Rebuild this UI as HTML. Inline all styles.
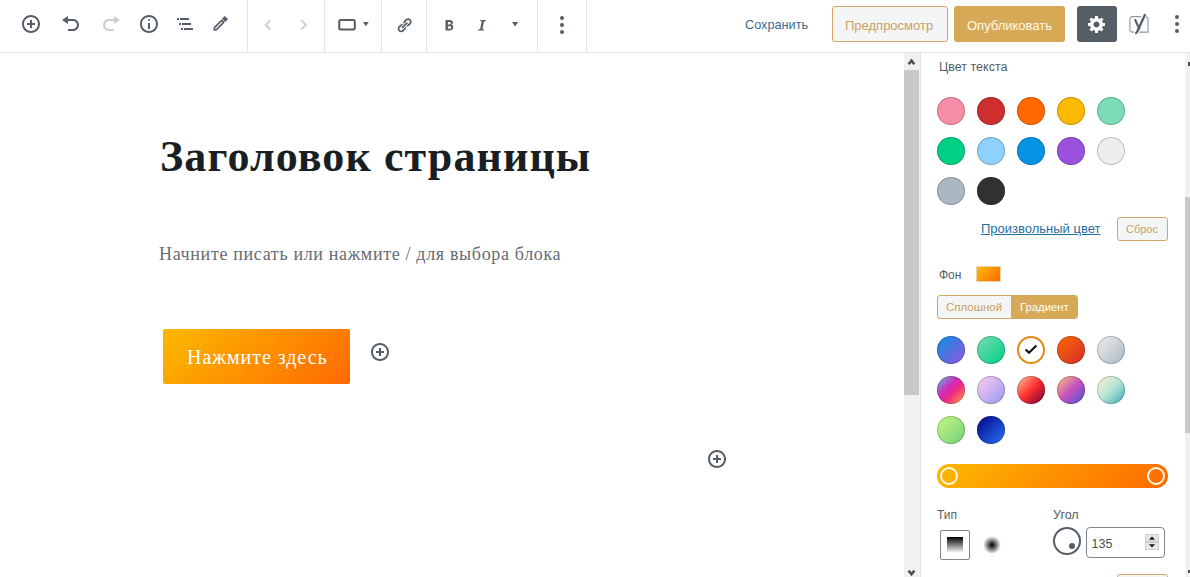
<!DOCTYPE html>
<html><head><meta charset="utf-8">
<style>
*{box-sizing:border-box;margin:0;padding:0}
html,body{width:1190px;height:577px;overflow:hidden;background:#fff;font-family:"Liberation Sans",sans-serif;color:#555d66}
.a{position:absolute}
.t{position:absolute;white-space:nowrap;line-height:1}
svg{position:absolute;display:block}
.sep{position:absolute;top:0;width:1px;height:52px;background:#e2e4e7}
.sw{position:absolute;width:28px;height:28px;border-radius:50%;box-shadow:inset 0 0 0 1px rgba(0,0,0,.2)}
</style></head><body>

<!-- HEADER -->
<div class="a" style="left:0;top:52px;width:1190px;height:1px;background:#e2e4e7"></div>
<div class="sep" style="left:247px"></div>
<div class="sep" style="left:324px"></div>
<div class="sep" style="left:381px"></div>
<div class="sep" style="left:426px"></div>
<div class="sep" style="left:537px"></div>
<div class="sep" style="left:586px"></div>

<!-- inserter -->
<svg style="left:21px;top:14px" width="20" height="20" viewBox="0 0 20 20"><path fill="#555d66" d="M10 1c-5 0-9 4-9 9s4 9 9 9 9-4 9-9-4-9-9-9zm0 16c-3.9 0-7-3.1-7-7s3.1-7 7-7 7 3.1 7 7-3.1 7-7 7zm1-11H9v3H6v2h3v3h2v-3h3V9h-3V6z"/></svg>
<!-- undo -->
<svg style="left:61px;top:14px" width="20" height="20" viewBox="0 0 20 20"><path fill="#555d66" d="M12 5H7V2L1 6l6 4V7h5c2.2 0 4 1.8 4 4s-1.8 4-4 4H7v2h5c3.3 0 6-2.7 6-6s-2.7-6-6-6z"/></svg>
<!-- redo -->
<svg style="left:100.5px;top:14px" width="20" height="20" viewBox="0 0 20 20"><path fill="#c9ced3" d="M8 5h5V2l6 4-6 4V7H8c-2.2 0-4 1.8-4 4s1.8 4 4 4h5v2H8c-3.3 0-6-2.7-6-6s2.7-6 6-6z"/></svg>
<!-- info -->
<svg style="left:139px;top:14px" width="20" height="20" viewBox="0 0 20 20"><path fill="#555d66" d="M9 15h2V9H9v6zm1-10c-.5 0-1 .5-1 1s.5 1 1 1 1-.5 1-1-.5-1-1-1zm0-4c-5 0-9 4-9 9s4 9 9 9 9-4 9-9-4-9-9-9zm0 16c-3.9 0-7-3.1-7-7s3.1-7 7-7 7 3.1 7 7-3.1 7-7 7z"/></svg>
<!-- outline -->
<svg style="left:170px;top:12px" width="30" height="24" viewBox="0 0 30 24"><g fill="#555d66"><rect x="7" y="6" width="2" height="2"/><rect x="10" y="6" width="9" height="2"/><rect x="9" y="11" width="2" height="2"/><rect x="12" y="11" width="9" height="2"/><rect x="11" y="16" width="2" height="2"/><rect x="14" y="16" width="9" height="2"/></g></svg>
<!-- pencil -->
<svg style="left:205.4px;top:10px" width="30" height="28" viewBox="0 0 30 28"><g transform="rotate(-45 14.9 14.15)"><path d="M8.6 12.75 H18.9 V15.55 H8.6 L6.8 14.15 Z" fill="none" stroke="#555d66" stroke-width="1.6" stroke-linejoin="round"/><rect x="20.2" y="11.85" width="4" height="4.6" fill="#555d66"/></g></svg>

<!-- nav arrows -->
<svg style="left:255px;top:12px" width="60" height="24" viewBox="0 0 60 24"><path fill="none" stroke="#ccd0d4" stroke-width="2" d="M15.3 8.2 L10.8 12.9 L15.3 17.5"/><path fill="none" stroke="#ccd0d4" stroke-width="2" d="M46.3 8.2 L50.8 12.9 L46.3 17.5"/></svg>
<!-- button icon -->
<svg style="left:334px;top:12px" width="40" height="24" viewBox="0 0 40 24"><rect x="5.2" y="8.1" width="15.6" height="9.4" rx="1.8" fill="none" stroke="#555d66" stroke-width="2"/><path fill="#555d66" d="M29 10 h5.8 l-2.9 4.3z"/></svg>
<!-- link -->
<svg style="left:395.65px;top:16.76px" width="16.47" height="16.47" viewBox="0 0 20 20"><path fill="#555d66" d="M17.74 2.76c1.68 1.690 1.68 4.41 0 6.1l-1.53 1.52c-1.12 1.12-2.7 1.47-4.14 1.090l2.62-2.61.76-.77.76-.76c.84-.84.84-2.2 0-3.04-.84-.85-2.2-.85-3.040 0l-.77.76-3.38 3.38c-.37-1.44-.02-3.02 1.1-4.14l1.52-1.53c1.69-1.68 4.42-1.68 6.1 0zM8.59 13.43l5.34-5.34c.42-.42.42-1.1 0-1.52-.44-.43-1.13-.39-1.53 0l-5.33 5.34c-.42.42-.42 1.1 0 1.52.44.43 1.130.39 1.52 0zm-.76 2.29l4.14-4.15c.38 1.44.03 3.02-1.09 4.14l-1.52 1.53c-1.69 1.68-4.41 1.68-6.1 0-1.68-1.68-1.680-4.42 0-6.1l1.53-1.52c1.12-1.12 2.7-1.470 4.14-1.1l-4.14 4.15c-.85.84-.85 2.2 0 3.05.84.84 2.2.84 3.04 0z"/></svg>
<!-- bold / italic / dropdown -->
<svg style="left:436px;top:12px" width="90" height="24" viewBox="0 0 90 24"><path fill="#555d66" d="M9.5 8 h4.1 c2.2 0 3.3 1 3.3 2.6 c0 1.1-.6 1.8-1.4 2.1 c1.1 .3 1.8 1.1 1.8 2.4 c0 1.8-1.3 3.4-3.6 3.4 H9.5z M11.9 10 v2.4 h1.6 c.9 0 1.3-.4 1.3-1.2 c0-.8-.5-1.2-1.3-1.2z M11.9 14.2 v2.6 h1.8 c1 0 1.5-.5 1.5-1.3 c0-.8-.5-1.3-1.5-1.3z"/><path fill="#555d66" d="M44.5 8 h5.5 l-.3 1.3 h-1.6 l-1.7 7.9 h1.6 l-.3 1.3 h-5.6 l.3-1.3 h1.7 l1.7-7.9 h-1.6z"/><path fill="#555d66" d="M76 10 h6.2 l-3.1 4.5z"/></svg>
<!-- more dots -->
<svg style="left:550px;top:10px" width="24" height="28" viewBox="0 0 24 28"><g fill="#555d66"><circle cx="12" cy="8" r="2"/><circle cx="12" cy="15" r="2"/><circle cx="12" cy="22" r="2"/></g></svg>

<!-- header right -->
<div class="t" style="left:745px;top:19px;font-size:12.7px;color:#3d6a8c">Сохранить</div>
<div class="a" style="left:832px;top:6px;width:116px;height:36px;border:1px solid #cfa663;border-radius:3px;background:#f3f5f6"></div>
<div class="t" style="left:845px;top:19px;font-size:13px;color:#c9a063">Предпросмотр</div>
<div class="a" style="left:954px;top:6px;width:111px;height:36px;border-radius:3px;background:#d6a956"></div>
<div class="t" style="left:967px;top:19px;font-size:13px;color:#fff8e8">Опубликовать</div>
<div class="a" style="left:1077px;top:6px;width:40px;height:36px;border-radius:3px;background:#555d66"></div>
<svg style="left:1087px;top:14px" width="20" height="20" viewBox="0 0 20 20"><path fill="#fff" d="M18 12h-2.18c-.17.7-.44 1.350-.81 1.93l1.54 1.54-2.1 2.1-1.54-1.54c-.58.36-1.23.63-1.91.79V19H8v-2.18c-.68-.16-1.33-.43-1.91-.79l-1.54 1.54-2.12-2.12 1.54-1.54c-.36-.58-.63-1.23-.79-1.91H1V9.030h2.17c.16-.7.44-1.35.8-1.94L2.43 5.550l2.1-2.1 1.54 1.54c.58-.37 1.24-.64 1.930-.81V2h3v2.18c.68.16 1.33.43 1.91.79l1.54-1.54 2.12 2.120-1.54 1.54c.36.59.64 1.24.8 1.94H18V12zm-8.5 1.5c1.66 0 3-1.34 3-3s-1.34-3-3-3-3 1.34-3 3 1.34 3 3 3z"/></svg>
<!-- yoast -->
<svg style="left:1122px;top:10px" width="40" height="28" viewBox="0 0 40 28"><path fill="none" stroke="#8f969d" stroke-width="1.1" d="M19 6.6 H10.6 A2.7 2.7 0 0 0 7.9 9.3 V19.4 A2.7 2.7 0 0 0 10.6 22.1 H12 M17.2 22.1 H26 V9.6 A2.8 2.8 0 0 0 24 6.9"/><path fill="none" stroke="#555d66" stroke-width="2.1" d="M12.9 9.3 L17.6 19.6"/><path fill="none" stroke="#555d66" stroke-width="2.3" d="M23.2 4.2 L15.2 21.6 Q14.6 23 13.3 23.5"/></svg>
<svg style="left:1165px;top:10px" width="24" height="28" viewBox="0 0 24 28"><g fill="#555d66"><circle cx="12" cy="7" r="2"/><circle cx="12" cy="14" r="2"/><circle cx="12" cy="21" r="2"/></g></svg>

<!-- MAIN CONTENT -->
<div class="t" style="left:160px;top:135px;font-family:'Liberation Serif',serif;font-weight:700;font-size:44px;letter-spacing:1.1px;color:#191e23">Заголовок страницы</div>
<div class="t" style="left:159px;top:245px;font-family:'Liberation Serif',serif;font-size:18px;letter-spacing:0.66px;color:#666c73">Начните писать или нажмите / для выбора блока</div>
<div class="a" style="left:163px;top:329px;width:187px;height:55px;border-radius:2px;background:linear-gradient(135deg,#fcb900 0%,#ff6900 100%)"></div>
<div class="t" style="left:187px;top:347px;font-family:'Liberation Serif',serif;font-size:20px;letter-spacing:0.95px;color:#fff">Нажмите здесь</div>
<svg style="left:370px;top:342px" width="20" height="20" viewBox="0 0 20 20"><path fill="#555d66" d="M10 1c-5 0-9 4-9 9s4 9 9 9 9-4 9-9-4-9-9-9zm0 16c-3.9 0-7-3.1-7-7s3.1-7 7-7 7 3.1 7 7-3.1 7-7 7zm1-11H9v3H6v2h3v3h2v-3h3V9h-3V6z"/></svg>
<svg style="left:707px;top:449px" width="20" height="20" viewBox="0 0 20 20"><path fill="#555d66" d="M10 1c-5 0-9 4-9 9s4 9 9 9 9-4 9-9-4-9-9-9zm0 16c-3.9 0-7-3.1-7-7s3.1-7 7-7 7 3.1 7 7-3.1 7-7 7zm1-11H9v3H6v2h3v3h2v-3h3V9h-3V6z"/></svg>

<!-- main scrollbar -->
<div class="a" style="left:904px;top:53px;width:16px;height:524px;background:#f1f1f1"></div>
<div class="a" style="left:904px;top:70px;width:15px;height:325px;background:#c8c8c8"></div>
<svg style="left:904px;top:53px" width="15" height="17" viewBox="0 0 15 17"><path fill="none" stroke="#505050" stroke-width="2.5" d="M4.6 11.2 L7.5 7.6 L10.4 11.2"/></svg>
<svg style="left:904px;top:560px" width="15" height="17" viewBox="0 0 15 17"><path fill="none" stroke="#505050" stroke-width="2.5" d="M4.6 10.6 L7.5 14.2 L10.4 10.6"/></svg>
<div class="a" style="left:920px;top:53px;width:1px;height:524px;background:#e2e4e7"></div>

<!-- SIDEBAR -->

<div class="t" style="left:939px;top:60.5px;font-size:12.5px;color:#555d66">Цвет текста</div>
<div class="sw" style="left:937px;top:97px;background:#f78da7"></div>
<div class="sw" style="left:977px;top:97px;background:#cf2e2e"></div>
<div class="sw" style="left:1017px;top:97px;background:#ff6900"></div>
<div class="sw" style="left:1057px;top:97px;background:#fcb900"></div>
<div class="sw" style="left:1097px;top:97px;background:#7bdcb5"></div>
<div class="sw" style="left:937px;top:137px;background:#00d084"></div>
<div class="sw" style="left:977px;top:137px;background:#8ed1fc"></div>
<div class="sw" style="left:1017px;top:137px;background:#0693e3"></div>
<div class="sw" style="left:1057px;top:137px;background:#9b51e0"></div>
<div class="sw" style="left:1097px;top:137px;background:#eeeeee"></div>
<div class="sw" style="left:937px;top:177px;background:#abb8c3"></div>
<div class="sw" style="left:977px;top:177px;background:#313131"></div>

<div class="t" style="left:981px;top:222px;font-size:13px;color:#1f6fa0;text-decoration:underline">Произвольный цвет</div>
<div class="a" style="left:1117px;top:217px;width:51px;height:24px;border:1px solid #cfa663;border-radius:3px;background:#f3f5f6"></div>
<div class="t" style="left:1126px;top:223.5px;font-size:11px;color:#c9a063">Сброс</div>

<div class="t" style="left:939px;top:269px;font-size:12px;color:#555d66">Фон</div>
<div class="a" style="left:976px;top:266px;width:25px;height:16px;border:1px solid #e6d6b0;background:linear-gradient(135deg,#fcb900 0%,#ff6900 100%)"></div>

<div class="a" style="left:937px;top:295px;width:141px;height:24px;border:1px solid #cfa663;border-radius:3px;background:#f3f5f6;overflow:hidden"><div class="a" style="left:73px;top:0;width:67px;height:22px;background:#d6a956"></div></div>
<div class="t" style="left:946px;top:301.5px;font-size:11.5px;color:#c9a063">Сплошной</div>
<div class="t" style="left:1020px;top:301.5px;font-size:11.3px;color:#fff">Градиент</div>
<div class="sw" style="left:937px;top:336px;background:linear-gradient(135deg,rgba(6,147,227,1) 0%,rgb(155,81,224) 100%)"></div>
<div class="sw" style="left:977px;top:336px;background:linear-gradient(135deg,rgb(122,220,180) 0%,rgb(0,208,130) 100%)"></div>
<div class="a" style="left:1017px;top:336px;width:28px;height:28px;border-radius:50%;border:2.6px solid #e08a12;background:#fff"></div>
<svg style="left:1017px;top:336px" width="28" height="28" viewBox="0 0 28 28"><path fill="none" stroke="#111" stroke-width="2.2" d="M8.6 13.5 L12 16.8 L19.4 9.5"/></svg>
<div class="sw" style="left:1057px;top:336px;background:linear-gradient(135deg,rgba(255,105,0,1) 0%,rgb(207,46,46) 100%)"></div>
<div class="sw" style="left:1097px;top:336px;background:linear-gradient(135deg,rgb(238,238,238) 0%,rgb(169,184,195) 100%)"></div>
<div class="sw" style="left:937px;top:376px;background:linear-gradient(135deg,rgb(74,234,220) 0%,rgb(151,120,209) 20%,rgb(207,42,186) 40%,rgb(238,44,130) 60%,rgb(251,105,98) 80%,rgb(254,248,76) 100%)"></div>
<div class="sw" style="left:977px;top:376px;background:linear-gradient(135deg,rgb(255,206,236) 0%,rgb(152,150,240) 100%)"></div>
<div class="sw" style="left:1017px;top:376px;background:linear-gradient(135deg,rgb(254,205,165) 0%,rgb(254,45,45) 50%,rgb(107,0,62) 100%)"></div>
<div class="sw" style="left:1057px;top:376px;background:linear-gradient(135deg,rgb(255,203,112) 0%,rgb(199,81,192) 50%,rgb(65,88,208) 100%)"></div>
<div class="sw" style="left:1097px;top:376px;background:linear-gradient(135deg,rgb(255,245,203) 0%,rgb(182,227,212) 50%,rgb(51,167,181) 100%)"></div>
<div class="sw" style="left:937px;top:416px;background:linear-gradient(135deg,rgb(202,248,128) 0%,rgb(113,206,126) 100%)"></div>
<div class="sw" style="left:977px;top:416px;background:linear-gradient(135deg,rgb(2,3,129) 0%,rgb(40,116,252) 100%)"></div>

<div class="a" style="left:937px;top:464px;width:231px;height:24px;border-radius:12px;background:linear-gradient(135deg,#fcb900 0%,#ff6900 100%)"></div>
<div class="a" style="left:940px;top:467px;width:18px;height:18px;border-radius:50%;border:2px solid #fff8e0"></div>
<div class="a" style="left:1147px;top:467px;width:18px;height:18px;border-radius:50%;border:2px solid #fff8e0"></div>

<div class="t" style="left:937px;top:509px;font-size:12px;color:#555d66">Тип</div>
<div class="a" style="left:940px;top:530px;width:30px;height:30px;border:1px solid #7e868e;border-radius:2px"></div>
<div class="a" style="left:947px;top:537px;width:16px;height:16px;background:linear-gradient(180deg,#000 0%,#fff 100%)"></div>
<div class="a" style="left:983px;top:536px;width:18px;height:18px;border-radius:50%;background:radial-gradient(closest-side,#000 0%,#1a1a1a 12%,#fff 100%)"></div>

<div class="t" style="left:1053px;top:508.5px;font-size:12.5px;color:#555d66">Угол</div>
<div class="a" style="left:1053px;top:527px;width:28px;height:28px;border:2px solid #555d66;border-radius:50%"></div>
<div class="a" style="left:1069px;top:543px;width:6px;height:6px;background:#555d66;border-radius:50%"></div>
<div class="a" style="left:1086px;top:527px;width:79px;height:31px;border:1px solid #7e868e;border-radius:4px;background:#fff"></div>
<div class="t" style="left:1091.5px;top:537.5px;font-size:12.5px;color:#4a4f55">135</div>
<div class="a" style="left:1145px;top:534px;width:14px;height:8px;background:#e6e6e6;border:1px solid #cfcfcf"></div>
<div class="a" style="left:1145px;top:542px;width:14px;height:8px;background:#e6e6e6;border:1px solid #cfcfcf"></div>
<svg style="left:1145px;top:534px" width="14" height="16" viewBox="0 0 14 16"><path fill="#111" d="M4 5.8 h6 l-3-3.4z M4 10.2 h6 l-3 3.4z"/></svg>
<div class="a" style="left:1117px;top:574px;width:51px;height:24px;border:1px solid #cfa663;border-radius:3px;background:#f3f5f6"></div>


<!-- right scrollbar -->
<div class="a" style="left:1185px;top:53px;width:5px;height:524px;background:#f1f1f1"></div>
<div class="a" style="left:1185px;top:197px;width:5px;height:236px;background:#c8c8c8"></div>
<div class="a" style="left:1188px;top:62px;width:2px;height:4px;background:#505050"></div>
<div class="a" style="left:1188px;top:570px;width:2px;height:3px;background:#505050"></div>

</body></html>
